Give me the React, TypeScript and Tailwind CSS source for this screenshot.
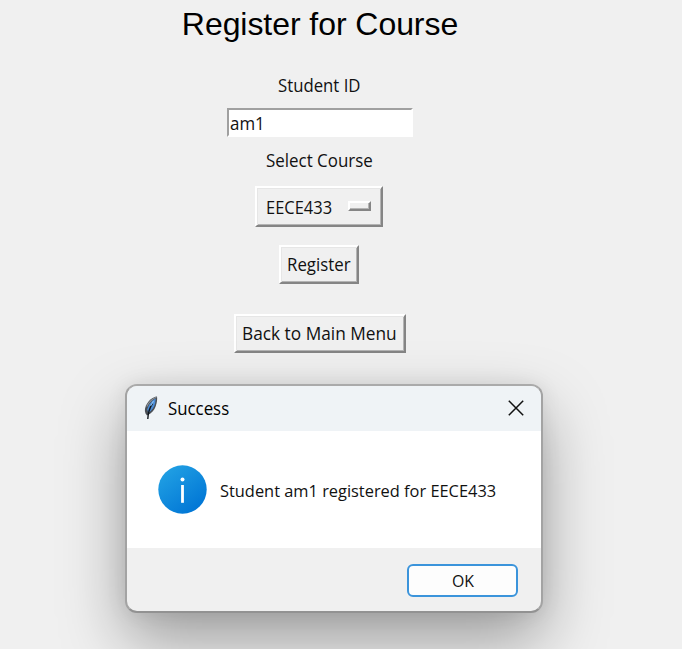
import React from "react";

const raised =
  "flex items-center border-2 border-t-white border-l-white border-r-[#858585] border-b-[#858585] bg-[#f0f0f0] shadow-[inset_1px_1px_0_#e6e6e6,inset_-1px_-1px_0_#b4b4b4]";

function Label({ text, width, className = "" }: { text: string; width: string; className?: string }) {
  return (
    <span className={`block whitespace-nowrap ${width}`}>
      <span className={`inline-block origin-left ${className}`}>{text}</span>
    </span>
  );
}

function Feather() {
  return (
    <svg width="16" height="26" viewBox="0 0 16 26" className="-mt-[2px] block">
      <path d="M14 1.5C9.5 2 5.5 5.5 3 10.5C1.2 14.5 1.5 18 4 20.5C8.5 18.5 11.5 15 12.8 11C14 7 14.4 4.5 14 1.5Z" fill="#4a4f56" />
      <path d="M12.8 3.5C9 5.5 5.5 9.5 4.2 14.5L5.5 17.8C9 15.5 11.3 12 12.2 8Z" fill="#4b8cd8" />
      <path d="M13.4 2.2C9.5 3.5 6 7 3.8 11.5" stroke="#8d9298" strokeWidth="1.2" fill="none" />
      <path d="M9.5 8.5C7 12 5.2 16 4.8 24" stroke="#10151b" strokeWidth="1.4" fill="none" />
      <path d="M10.5 6L7.6 10.8" stroke="#8fc4f4" strokeWidth="1.1" />
    </svg>
  );
}

function InfoIcon() {
  return (
    <svg width="49" height="50" viewBox="0 0 49 50" className="block">
      <defs>
        <linearGradient id="info" x1="0.15" y1="0.1" x2="0.8" y2="0.95">
          <stop offset="0" stopColor="#209fe3" />
          <stop offset="1" stopColor="#0075d5" />
        </linearGradient>
      </defs>
      <circle cx="24.5" cy="24.5" r="24.2" fill="url(#info)" />
      <circle cx="24.5" cy="14.5" r="2" fill="#fff" />
      <path d="M24.5 20V37.8" stroke="#fff" strokeWidth="2.8" />
    </svg>
  );
}

export default function App() {
  return (
    <main className="relative h-[649px] w-[682px] overflow-hidden bg-[#f0f0f0] font-['Open_Sans','Noto_Sans',sans-serif] text-[18px] leading-[24px] text-[#111]">
      <div className="flex w-[640px] flex-col items-center">
        <h1 className="mt-[4px] h-[40px] whitespace-nowrap font-['Liberation_Sans',Arial,sans-serif] text-[32px] leading-[40px] tracking-[-0.06px] text-black">
          Register for Course
        </h1>
        <div className="mt-[29px] h-[24px]">
          <Label text="Student ID" width="w-[84px]" className="scale-x-[0.93]" />
        </div>
        <div className="mt-[11px] flex h-[29px] w-[186px] items-center border-2 border-t-[#a0a0a0] border-l-[#a0a0a0] border-r-white border-b-white bg-white pl-[1px]">
          <Label text="am1" width="w-[36px]" className="scale-x-[0.94]" />
        </div>
        <div className="mt-[11px] h-[24px]">
          <Label text="Select Course" width="w-[108px]" className="scale-x-[0.94]" />
        </div>
        <div className={`${raised} mt-[14px] mr-[2px] h-[41px] w-[128px] justify-between pr-[10px] pl-[9px]`}>
          <Label text="EECE433" width="w-[67px]" className="scale-x-[0.915]" />
          <span className="-mt-[2px] h-[10px] w-[23px] border-2 border-t-white border-l-white border-r-[#858585] border-b-[#858585] shadow-[inset_-1px_-1px_0_#b4b4b4]" />
        </div>
        <div className={`${raised} mt-[18px] mr-[2px] h-[39px] w-[80px] pb-[2px] pl-[6px]`}>
          <Label text="Register" width="w-[65px]" className="scale-x-[0.935]" />
        </div>
        <div className={`${raised} mt-[30px] h-[39px] w-[172px] pb-[2px] pl-[6px]`}>
          <Label text="Back to Main Menu" width="w-[156px]" className="scale-x-[0.96]" />
        </div>
      </div>

      <section
        role="dialog"
        className="absolute top-[384px] left-[125px] flex h-[229px] w-[418px] flex-col rounded-[12px] border-2 border-t-[#aaa] border-x-[#a3a3a3] border-b-[#929292] bg-[#f0f0f0] shadow-[0_28px_64px_rgba(0,0,0,0.35),0_0_20px_rgba(0,0,0,0.08)]"
      >
        <header className="flex h-[45px] items-center rounded-t-[10px] bg-[#eff3f6] pr-[17px] pl-[16px]">
          <Feather />
          <div className="-mt-[2px] ml-[9px] flex-1 text-black">
            <Label text="Success" width="w-[62px]" className="scale-x-[0.935]" />
          </div>
          <svg width="16" height="16" viewBox="0 0 16 16" className="-mt-[2px] block">
            <path d="M.8.8L15.2 15.2M15.2.8L.8 15.2" stroke="#111" strokeWidth="1.5" />
          </svg>
        </header>
        <div className="flex h-[117px] items-center bg-white pl-[31px]">
          <InfoIcon />
          <div className="mt-[2px] ml-[13px] text-[16px]">
            <Label text="Student am1 registered for EECE433" width="w-[277px]" className="scale-x-[1.024]" />
          </div>
        </div>
        <footer className="flex h-[63px] items-start justify-end pt-[16px] pr-[23px]">
          <button className="flex h-[33px] w-[111px] items-center rounded-[6px] border-2 border-[#3b94db] bg-[#fdfdfd] pl-[42px] text-[16px]">
            <Label text="OK" width="w-[24px]" className="scale-x-[0.99]" />
          </button>
        </footer>
      </section>
    </main>
  );
}
